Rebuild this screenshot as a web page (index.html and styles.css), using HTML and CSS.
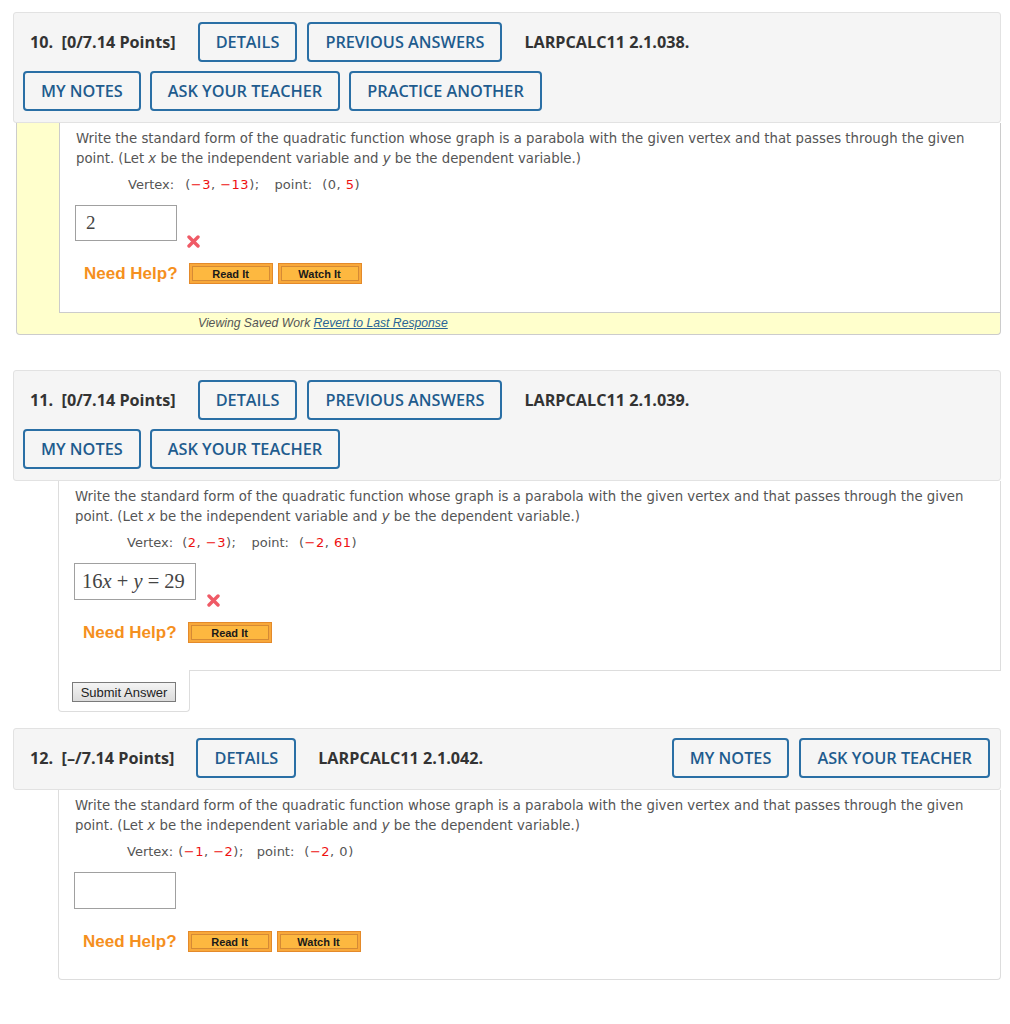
FILE: index.html
```html
<!DOCTYPE html>
<html>
<head>
<meta charset="utf-8">
<link rel="stylesheet" href="styles.css">
</head>
<body>
<main class="page">

  <section class="q q10">
    <header class="q-head q-head-wrap">
      <div class="grp">
        <span class="q-title">10.&nbsp; [0/7.14 Points]</span>
        <span class="btn">DETAILS</span>
        <span class="btn">PREVIOUS ANSWERS</span>
        <span class="q-code">LARPCALC11 2.1.038.</span>
      </div>
      <div class="grp grp-right">
        <span class="btn">MY NOTES</span>
        <span class="btn">ASK YOUR TEACHER</span>
        <span class="btn">PRACTICE ANOTHER</span>
      </div>
    </header>
    <div class="saved-wrap">
      <div class="content content-saved">
        <p class="prompt">Write the standard form of the quadratic function whose graph is a parabola with the given vertex and that passes through the given point. (Let <i>x</i> be the independent variable and <i>y</i> be the dependent variable.)</p>
        <p class="given"><span class="lbl">Vertex:</span><span class="pt">(<span class="r">&minus;3</span>, <span class="r">&minus;13</span>);</span><span class="lbl lbl2">point:</span><span class="pt">(0, <span class="r">5</span>)</span></p>
        <div class="answer">
          <span class="box box-short"><span>2</span></span>
          <svg class="wrong" width="13" height="13" viewBox="0 0 13 13"><path d="M2 2 L11 11 M11 2 L2 11" stroke="#ef5a66" stroke-width="3.4" stroke-linecap="round"/></svg>
        </div>
        <div class="help">
          <span class="need">Need Help?</span>
          <span class="hbtn">Read It</span>
          <span class="hbtn">Watch It</span>
        </div>
      </div>
      <div class="saved-note">Viewing Saved Work <a href="#">Revert to Last Response</a></div>
    </div>
  </section>

  <section class="q q11">
    <header class="q-head q-head-wrap">
      <div class="grp">
        <span class="q-title">11.&nbsp; [0/7.14 Points]</span>
        <span class="btn">DETAILS</span>
        <span class="btn">PREVIOUS ANSWERS</span>
        <span class="q-code">LARPCALC11 2.1.039.</span>
      </div>
      <div class="grp grp-right">
        <span class="btn">MY NOTES</span>
        <span class="btn">ASK YOUR TEACHER</span>
      </div>
    </header>
    <div class="content content-open">
      <p class="prompt">Write the standard form of the quadratic function whose graph is a parabola with the given vertex and that passes through the given point. (Let <i>x</i> be the independent variable and <i>y</i> be the dependent variable.)</p>
      <p class="given"><span class="lbl lbl-b">Vertex:</span><span class="pt">(<span class="r">2</span>, <span class="r">&minus;3</span>);</span><span class="lbl lbl2">point:</span><span class="pt">(<span class="r">&minus;2</span>, <span class="r">61</span>)</span></p>
      <div class="answer">
        <span class="box box-math"><span>16<i>x</i> + <i>y</i> = 29</span></span>
        <svg class="wrong wrong-b" width="13" height="13" viewBox="0 0 13 13"><path d="M2 2 L11 11 M11 2 L2 11" stroke="#ef5a66" stroke-width="3.4" stroke-linecap="round"/></svg>
      </div>
      <div class="help">
        <span class="need">Need Help?</span>
        <span class="hbtn">Read It</span>
      </div>
    </div>
    <div class="submit-row">
      <div class="submit-tab"><span class="submit">Submit Answer</span></div>
      <div class="submit-fill"></div>
    </div>
  </section>

  <section class="q q12">
    <header class="q-head">
      <div class="grp">
        <span class="q-title">12.&nbsp; [&ndash;/7.14 Points]</span>
        <span class="btn">DETAILS</span>
        <span class="q-code">LARPCALC11 2.1.042.</span>
      </div>
      <div class="grp grp-right">
        <span class="btn">MY NOTES</span>
        <span class="btn">ASK YOUR TEACHER</span>
      </div>
    </header>
    <div class="content content-closed">
      <p class="prompt">Write the standard form of the quadratic function whose graph is a parabola with the given vertex and that passes through the given point. (Let <i>x</i> be the independent variable and <i>y</i> be the dependent variable.)</p>
      <p class="given"><span class="lbl lbl-c">Vertex:</span><span class="pt">(<span class="r">&minus;1</span>, <span class="r">&minus;2</span>);</span><span class="lbl lbl2 lbl2-c">point:</span><span class="pt">(<span class="r">&minus;2</span>, 0)</span></p>
      <div class="answer">
        <span class="box box-short"></span>
      </div>
      <div class="help">
        <span class="need">Need Help?</span>
        <span class="hbtn">Read It</span>
        <span class="hbtn">Watch It</span>
      </div>
    </div>
  </section>

</main>
</body>
</html>
```

FILE: styles.css
```css
html, body {
  margin: 0;
  padding: 0;
  background: #ffffff;
}

.page {
  padding: 12px 9px 0 13px;
  font-family: "DejaVu Sans", Verdana, sans-serif;
  font-size: 13px;
  color: #555555;
}

.q11 { margin-top: 35px; }
.q12 { margin-top: 16px; }

/* header */
.q-head {
  display: flex;
  flex-wrap: wrap;
  align-items: center;
  row-gap: 9px;
  background: #f5f5f5;
  border: 1px solid #e2e2e2;
  border-radius: 3px;
  padding: 9px 10px 11px 10px;
  font-family: "Open Sans", "DejaVu Sans", sans-serif;
}

.grp {
  display: flex;
  align-items: center;
  gap: 10px;
}

.grp-right {
  margin-left: auto;
}

.q-head-wrap .grp-right {
  margin-left: -1px;
  flex-basis: 100%;
  gap: 9px;
}

.q-title {
  font-size: 16.2px;
  font-weight: 700;
  color: #333333;
  margin: 0 12px 0 6px;
  white-space: nowrap;
}

.q-code {
  font-size: 16.2px;
  font-weight: 700;
  color: #333333;
  margin-left: 12px;
  white-space: nowrap;
}

.btn {
  display: inline-flex;
  align-items: center;
  box-sizing: border-box;
  height: 40px;
  padding: 0 16px;
  border: 2px solid #2a6fa5;
  border-radius: 4px;
  font-size: 16.3px;
  font-weight: 600;
  color: #1f5c8e;
  white-space: nowrap;
  background: transparent;
}

/* bodies */
.saved-wrap {
  margin-left: 3px;
  background: #ffffcc;
  border: 1px solid #cccccc;
  border-top: none;
  border-radius: 0 0 4px 4px;
}

.content {
  background: #ffffff;
  padding: 6px 16px 27px 16px;
}

.content-saved {
  margin-left: 42px;
  border-left: 1px solid #cccccc;
  border-bottom: 1px solid #cccccc;
  padding-bottom: 28px;
}

.content-open {
  margin-left: 45px;
  border-left: 1px solid #dddddd;
  border-right: 1px solid #dddddd;
}

.content-closed {
  margin-left: 45px;
  border: 1px solid #dddddd;
  border-top: none;
  border-radius: 0 0 4px 4px;
}

.prompt {
  margin: 0;
  line-height: 20px;
  font-size: 13.3px;
}

.prompt i {
  font-style: italic;
}

.given {
  margin: 6px 0 0 0;
  padding-left: 52px;
  line-height: 20px;
  white-space: nowrap;
}

.pt { letter-spacing: 0.5px; }

.lbl { margin-right: 11px; }
.lbl-b { margin-right: 9px; }
.lbl-c { margin-right: 5px; }
.lbl2 { margin-left: 15px; margin-right: 10px; }
.lbl2-c { margin-left: 13px; }

.r { color: #ee1111; }

.answer {
  display: flex;
  align-items: flex-end;
  margin-top: 10px;
  height: 37px;
}

.box {
  box-sizing: border-box;
  display: inline-flex;
  align-items: center;
  height: 37px;
  min-width: 102px;
  padding: 0 7px;
  border: 1px solid #a0a0a0;
  font-family: "Liberation Serif", "DejaVu Serif", serif;
  font-size: 20.5px;
  color: #444444;
  margin-left: -1px;
  white-space: pre;
}

.box-short { width: 102px; padding-left: 10px; font-size: 19px; }
.box-math { width: 122px; }

.q10 .box { height: 36px; }
.q10 .answer { height: 36px; }

.wrong {
  margin-left: 10px;
  margin-bottom: -7px;
}

.wrong-b {
  margin-left: 11px;
}

.help {
  display: flex;
  align-items: center;
  margin-top: 22px;
  margin-left: 8px;
  gap: 5px;
}

.need {
  font-family: "Liberation Sans", Arial, sans-serif;
  font-weight: 700;
  font-size: 17px;
  color: #f5901e;
  margin-right: 6px;
}

.hbtn {
  box-sizing: border-box;
  display: inline-flex;
  align-items: center;
  justify-content: center;
  width: 84px;
  height: 21px;
  background: #fdb840;
  border: 1px solid #e48a2a;
  box-shadow: inset 0 0 0 2px #f8a83a, inset 0 0 0 3px #d58a35;
  font-family: "Liberation Sans", Arial, sans-serif;
  font-weight: 700;
  font-size: 11px;
  color: #1a1a1a;
}

.saved-note {
  height: 21px;
  line-height: 20px;
  padding-left: 181px;
  font-family: "Liberation Sans", Arial, sans-serif;
  font-style: italic;
  font-size: 12.2px;
  color: #555555;
}

.saved-note a {
  color: #2a6496;
  text-decoration: underline;
}

/* submit */
.submit-row {
  display: flex;
  margin-left: 45px;
}

.submit-tab {
  width: 132px;
  padding: 12px 0 9px 13px;
  box-sizing: border-box;
  border: 1px solid #dddddd;
  border-top: none;
  border-radius: 0 0 4px 4px;
}

.submit-fill {
  flex: 1;
  border-top: 1px solid #dddddd;
}

.submit {
  box-sizing: border-box;
  display: inline-flex;
  align-items: center;
  justify-content: center;
  width: 104px;
  height: 20px;
  border: 1px solid #7a7a7a;
  background: linear-gradient(#f4f4f4, #dcdcdc);
  font-family: "Liberation Sans", Arial, sans-serif;
  font-size: 13px;
  color: #222222;
}
```
